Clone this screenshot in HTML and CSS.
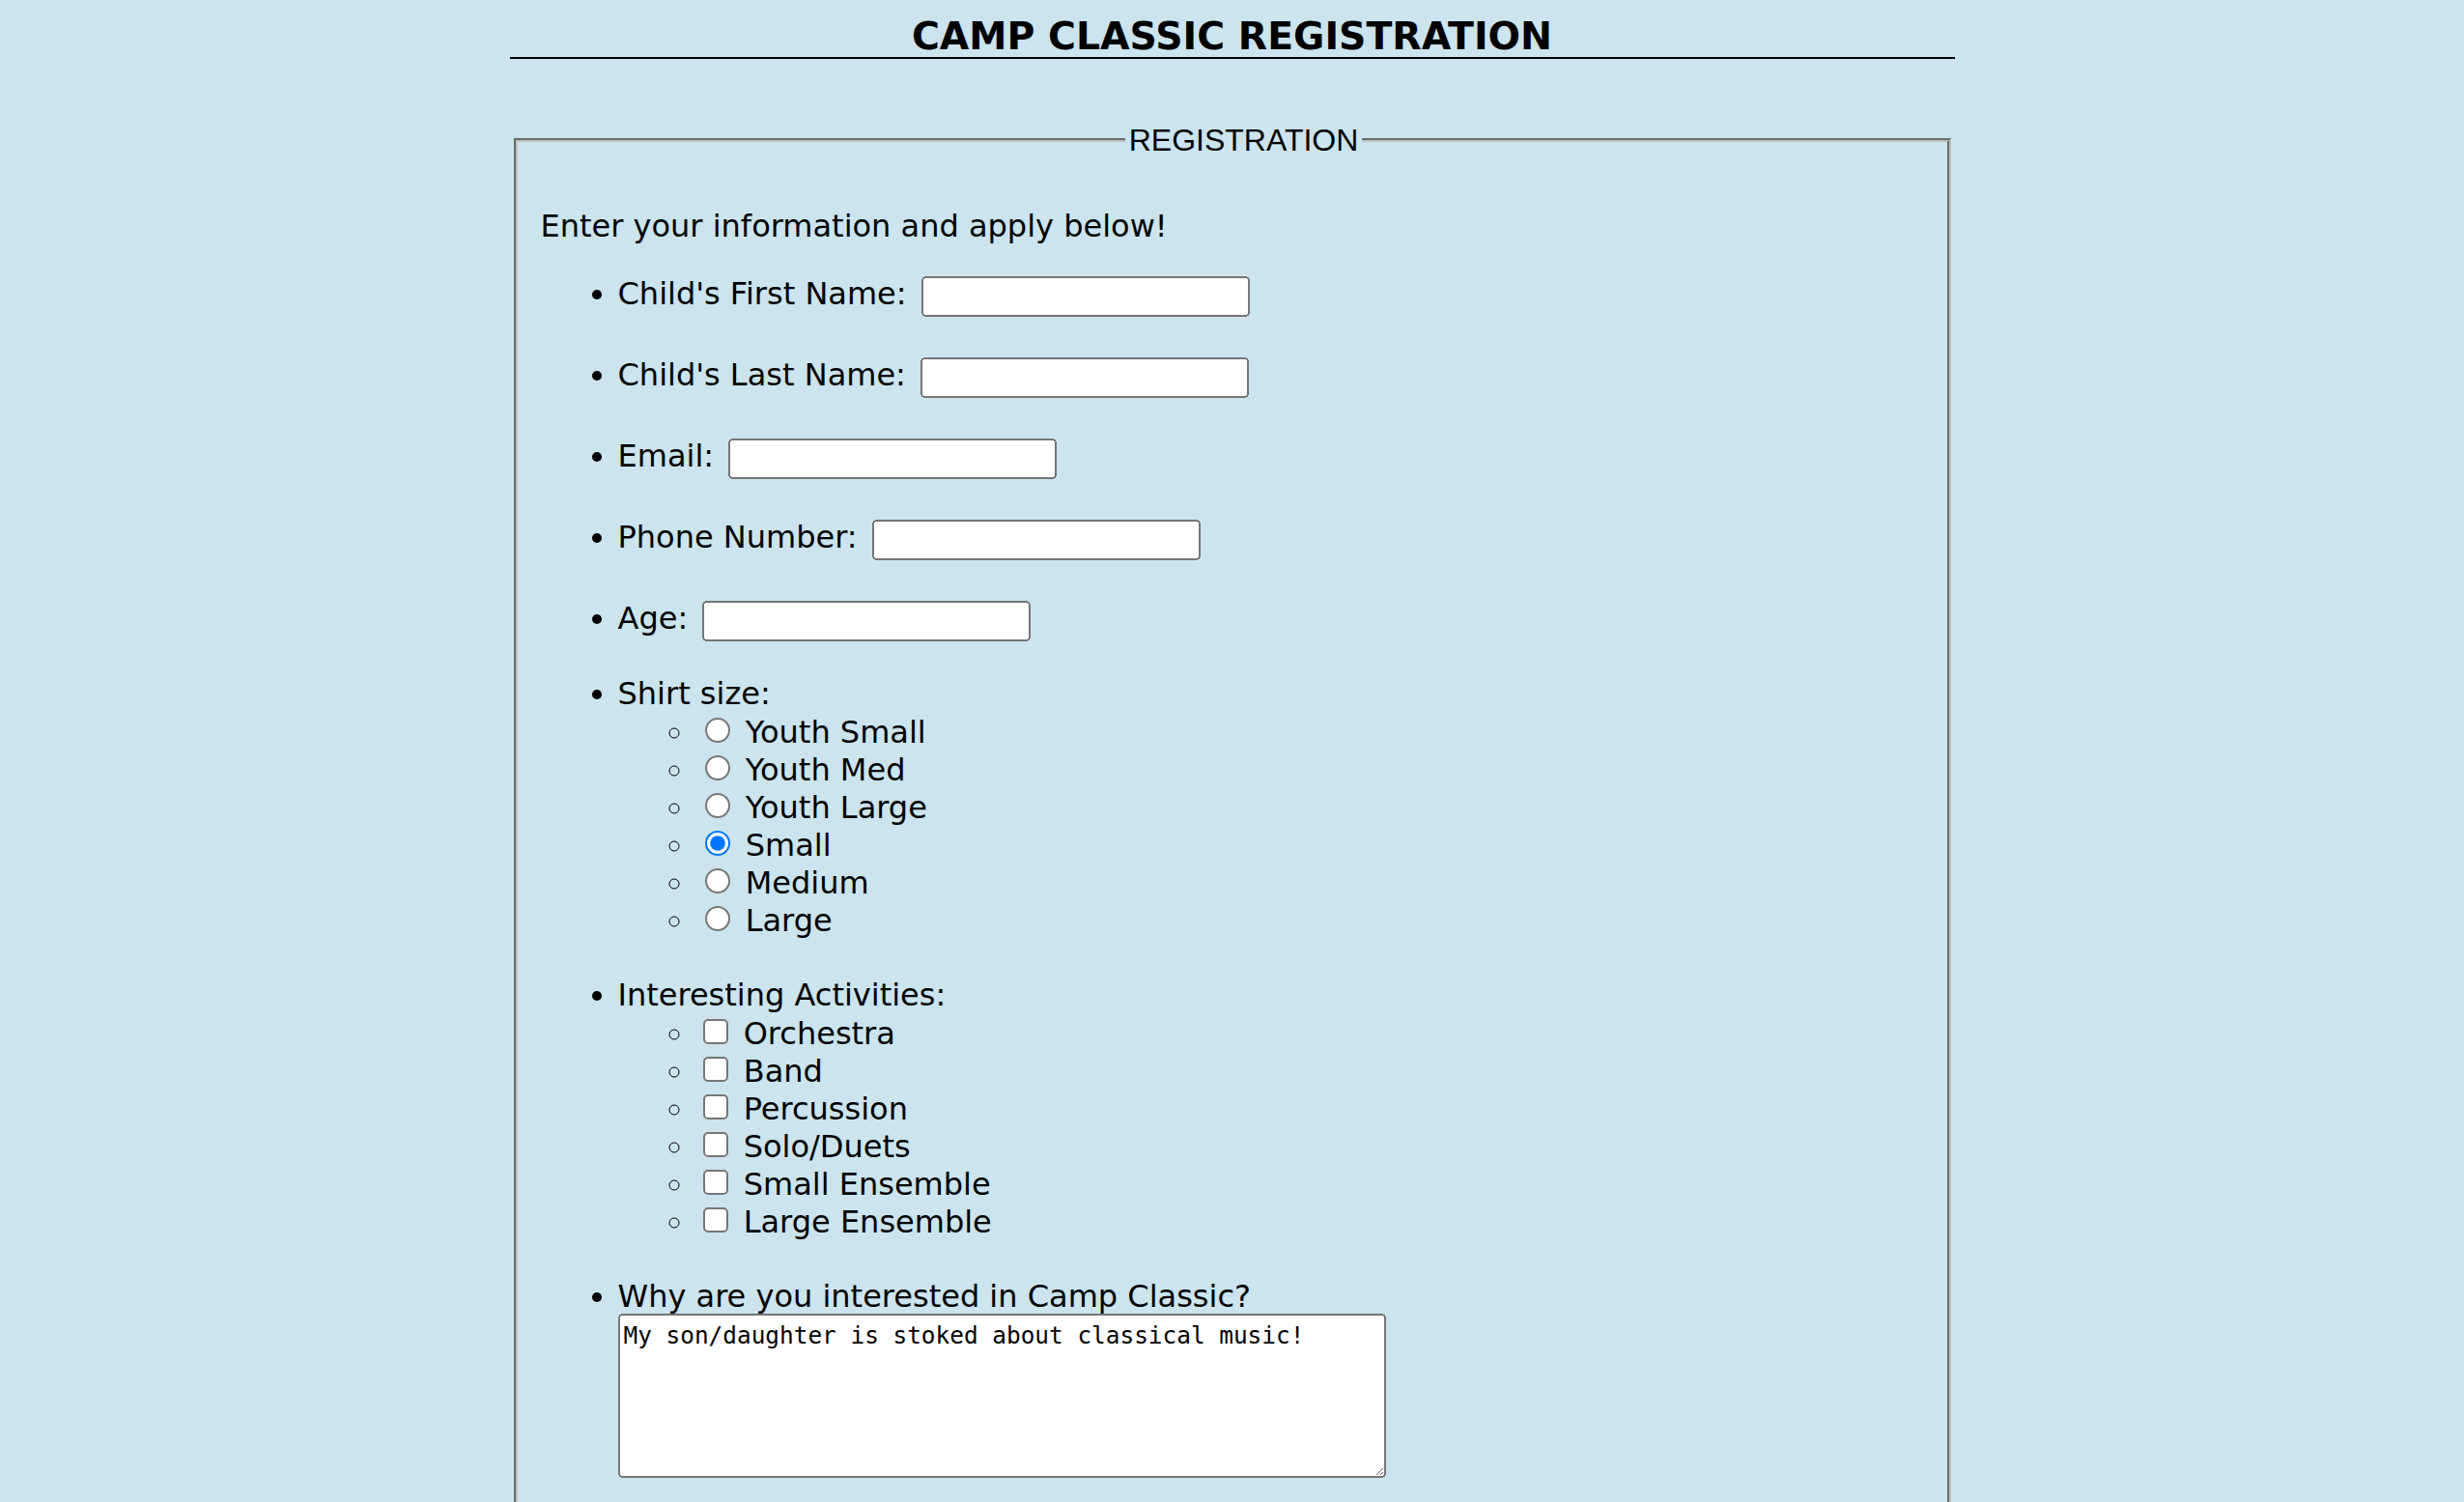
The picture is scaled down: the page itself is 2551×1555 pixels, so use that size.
FILE: index.html
```html
<!DOCTYPE html>
<html lang="en">
<head>
<meta charset="utf-8">
<title>Camp Classic Registration</title>
<link rel="stylesheet" href="styles.css">
</head>
<body>
<div class="page">
  <h1 class="title">CAMP CLASSIC REGISTRATION</h1>
  <form class="form">
    <fieldset class="box">
      <legend class="box-legend">REGISTRATION</legend>
      <p class="intro">Enter your information and apply below!</p>
      <ul class="fields">
        <li class="field field-text">Child's First Name: <input type="text" class="text-input"></li>
        <li class="field field-text">Child's Last Name: <input type="text" class="text-input"></li>
        <li class="field field-text">Email: <input type="email" class="text-input"></li>
        <li class="field field-text">Phone Number: <input type="tel" class="text-input"></li>
        <li class="field field-text">Age: <input type="text" class="text-input"></li>
        <li class="field field-list">Shirt size:
          <ul class="options">
            <li class="option"><input type="radio" name="size"> Youth Small</li>
            <li class="option"><input type="radio" name="size"> Youth Med</li>
            <li class="option"><input type="radio" name="size"> Youth Large</li>
            <li class="option"><input type="radio" name="size" checked> Small</li>
            <li class="option"><input type="radio" name="size"> Medium</li>
            <li class="option"><input type="radio" name="size"> Large</li>
          </ul>
        </li>
        <li class="field field-list">Interesting Activities:
          <ul class="options">
            <li class="option"><input type="checkbox"> Orchestra</li>
            <li class="option"><input type="checkbox"> Band</li>
            <li class="option"><input type="checkbox"> Percussion</li>
            <li class="option"><input type="checkbox"> Solo/Duets</li>
            <li class="option"><input type="checkbox"> Small Ensemble</li>
            <li class="option"><input type="checkbox"> Large Ensemble</li>
          </ul>
        </li>
        <li class="field">Why are you interested in Camp Classic?
          <textarea class="why">My son/daughter is stoked about classical music!</textarea>
        </li>
      </ul>
    </fieldset>
  </form>
</div>
</body>
</html>
```

FILE: styles.css
```css
html {
  zoom: 2;
  background: #cbe4ee;
}

body {
  margin: 8px;
  font-family: "DejaVu Sans", Verdana, sans-serif;
  font-size: 16px;
  color: #000;
}

.page {
  width: 748px;
  margin: 0 auto;
}

.title {
  margin: 0 0 32.8px;
  font-size: 19.7px;
  font-weight: bold;
  line-height: 21.6px;
  text-align: center;
  border-bottom: 1px solid #000;
}

.form {
  margin: 0;
}

.box {
  margin: 0 2px;
  border: 2px groove rgb(192, 192, 192);
  padding: 25.6px 0 10px 12px;
}

.box-legend {
  margin: 0 auto;
  padding: 0 2px;
  font-family: "Liberation Sans", Arial, sans-serif;
  font-size: 16px;
}

.intro {
  margin: 0 0 13px;
}

.fields {
  margin: 0;
  padding-left: 40px;
  list-style: disc;
}

.field {
  margin-bottom: 17.6px;
}

.field-list {
  margin-bottom: 20px;
}

.text-input {
  box-sizing: border-box;
  width: 170px;
  height: 21px;
  margin: 3.4px 0 0 2.5px;
}

.options {
  margin: 0;
  padding-left: 40px;
  list-style: circle;
}

.option {
  height: 19.5px;
}

.why {
  display: block;
  box-sizing: border-box;
  width: 397.5px;
  height: 85.3px;
  margin: -0.6px 0 0;
  padding: 3.2px 2px 2px;
  font-family: "DejaVu Sans Mono", monospace;
  font-size: 12.2px;
}
```
